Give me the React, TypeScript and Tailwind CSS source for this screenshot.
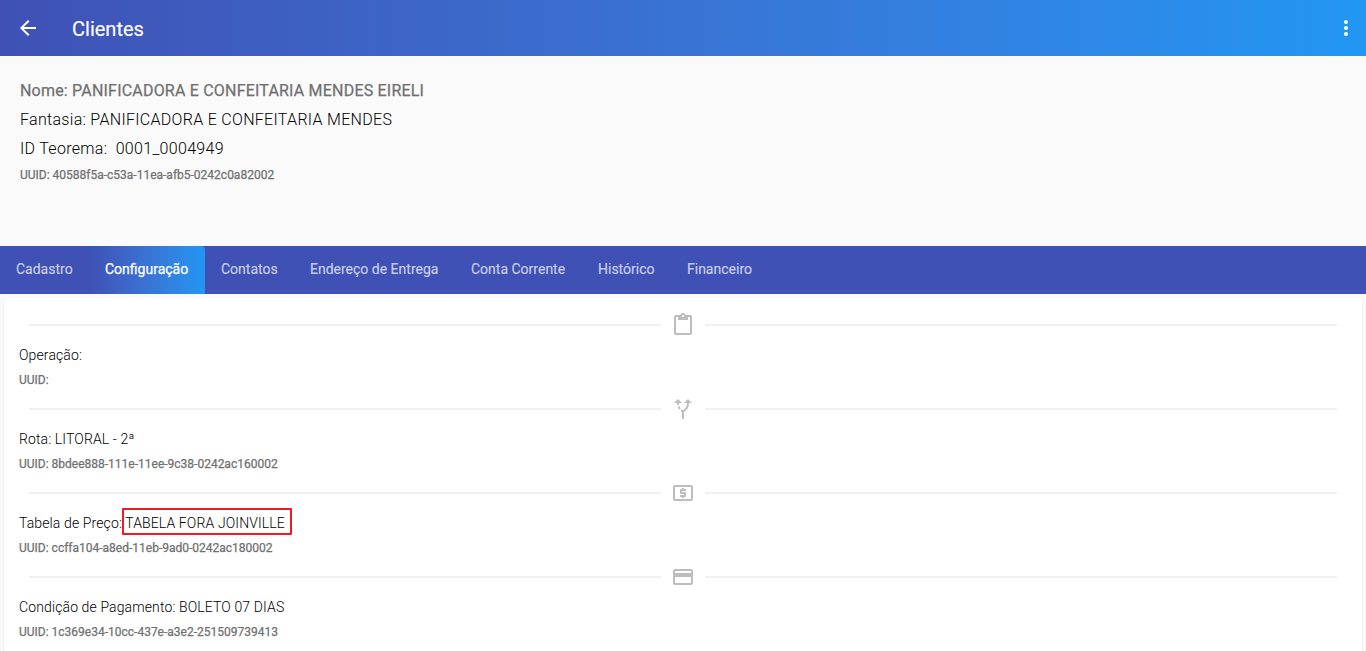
import type { IconType } from "react-icons";
import { clsx } from "clsx";
import {
  MdAltRoute,
  MdArrowBack,
  MdContentPaste,
  MdCreditCard,
  MdLocalAtm,
  MdMoreVert,
} from "react-icons/md";

const tabs = [
  { label: "Cadastro", width: "w-[89px]" },
  { label: "Configuração", width: "w-[116px]" },
  { label: "Contatos", width: "w-[89px]" },
  { label: "Endereço de Entrega", width: "w-[161px]" },
  { label: "Conta Corrente", width: "w-[127px]" },
  { label: "Histórico", width: "w-[89px]" },
  { label: "Financeiro", width: "w-[98px]" },
];

type Setting = {
  icon: IconType;
  label: string;
  value?: string;
  uuid?: string;
  highlighted?: boolean;
};

const settings: Setting[] = [
  { icon: MdContentPaste, label: "Operação:" },
  {
    icon: MdAltRoute,
    label: "Rota:",
    value: "LITORAL - 2ª",
    uuid: "8bdee888-111e-11ee-9c38-0242ac160002",
  },
  {
    icon: MdLocalAtm,
    label: "Tabela de Preço:",
    value: "TABELA FORA JOINVILLE",
    uuid: "ccffa104-a8ed-11eb-9ad0-0242ac180002",
    highlighted: true,
  },
  {
    icon: MdCreditCard,
    label: "Condição de Pagamento:",
    value: "BOLETO 07 DIAS",
    uuid: "1c369e34-10cc-437e-a3e2-251509739413",
  },
];

// Thickens the regular weight without changing its advance widths
const emphasis = "[-webkit-text-stroke:0.25px]";

function AppBar() {
  return (
    <header className="flex h-14 shrink-0 items-center justify-between bg-gradient-to-r from-[#3f51b5] to-[#2196f3] pl-4 pr-2 text-white">
      <div className="flex items-center gap-8">
        <button aria-label="Voltar">
          <MdArrowBack size={24} />
        </button>
        <h1 className="pt-0.5 text-xl leading-6 [-webkit-text-stroke:0.15px]">Clientes</h1>
      </div>
      <button aria-label="Mais opções">
        <MdMoreVert size={24} />
      </button>
    </header>
  );
}

function ClientSummary() {
  return (
    <section className="h-[190px] shrink-0 whitespace-pre px-5 pt-5 text-base text-black">
      <p className={clsx("h-[29px] leading-[29px] tracking-[0.2px] text-[#707070]", emphasis)}>
        Nome: PANIFICADORA E CONFEITARIA MENDES EIRELI
      </p>
      <p className="h-[29px] leading-[29px] font-light tracking-[0.3px]">
        Fantasia: PANIFICADORA E CONFEITARIA MENDES
      </p>
      <p className="h-[29px] leading-[29px] font-light tracking-[0.3px]">ID Teorema:  0001_0004949</p>
      <p className={clsx("h-6 text-xs leading-6 text-[#707070]", emphasis)}>
        UUID: 40588f5a-c53a-11ea-afb5-0242c0a82002
      </p>
    </section>
  );
}

function TabBar({ active }: { active: string }) {
  return (
    <nav className="flex h-12 shrink-0 bg-[#3f51b5] text-sm">
      {tabs.map(({ label, width }) => (
        <button
          key={label}
          className={clsx(
            "h-12 shrink-0 pb-0.5 pl-4 text-left whitespace-nowrap",
            width,
            label === active
              ? "rounded-t bg-gradient-to-r from-[#3f51b5] to-[#2196f3] text-white [-webkit-text-stroke:0.25px]"
              : "text-white/70 [-webkit-text-stroke:0.15px]"
          )}
        >
          {label}
        </button>
      ))}
    </nav>
  );
}

function SettingSection({ icon: Icon, label, value, uuid, highlighted = false }: Setting) {
  return (
    <section className="h-[84px]">
      <div className="flex h-6 items-center gap-2.5 px-2.5">
        <div className="h-0.5 flex-1 bg-[#f0f0f0]" />
        <Icon size={24} className="text-[#bdbdbd]" />
        <div className="h-0.5 flex-1 bg-[#f0f0f0]" />
      </div>
      <p className="h-[37px] text-sm leading-9 font-light tracking-[0.12px] text-black">
        {label}{" "}
        {value && (
          <span className="relative">
            {value}
            {highlighted && (
              <span className="absolute -top-[7px] -left-[3px] h-[27px] w-[170px] rounded-[1px] border-2 border-[#ed1c24]" />
            )}
          </span>
        )}
      </p>
      <p className={clsx("h-3 text-xs leading-3 text-[#707070]", emphasis)}>UUID: {uuid}</p>
    </section>
  );
}

export default function App() {
  return (
    <div className="flex h-[651px] flex-col overflow-hidden bg-[#fafafa] font-['Roboto',sans-serif]">
      <AppBar />
      <ClientSummary />
      <TabBar active="Configuração" />
      <main className="mx-1 mt-1 h-[400px] shrink-0 rounded-t bg-white px-[15px] pt-[15px] shadow-[0_1px_2px_rgba(0,0,0,0.12)]">
        {settings.map((setting) => (
          <SettingSection key={setting.label} {...setting} />
        ))}
      </main>
    </div>
  );
}
